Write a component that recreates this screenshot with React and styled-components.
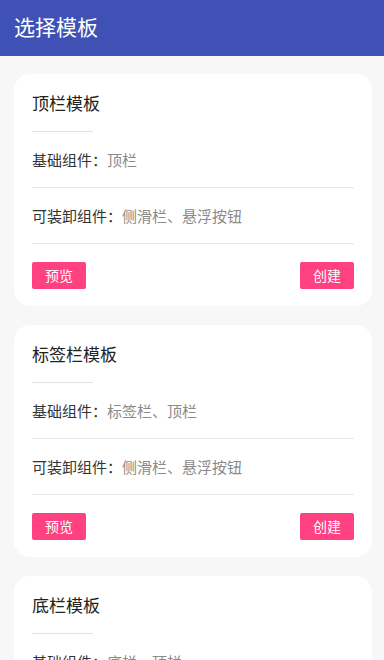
import React from 'react';
import styled, { createGlobalStyle } from 'styled-components';

const templates = [
  { title: '顶栏模板', base: '顶栏', optional: '侧滑栏、悬浮按钮' },
  { title: '标签栏模板', base: '标签栏、顶栏', optional: '侧滑栏、悬浮按钮' },
  { title: '底栏模板', base: '底栏、顶栏', optional: '侧滑栏、悬浮按钮' },
];

const GlobalStyle = createGlobalStyle`
  html, body {
    margin: 0;
    padding: 0;
    background: #f7f7f7;
    font-family: "Noto Sans CJK SC", "Noto Sans", sans-serif;
  }
  * {
    box-sizing: border-box;
  }
`;

const App = () => {
  return (
    <Page>
      <GlobalStyle />
      <TopBar>
        <TopTitle>选择模板</TopTitle>
      </TopBar>
      <List>
        {templates.map((t) => (
          <Card key={t.title}>
            <CardTitle>{t.title}</CardTitle>
            <ShortRule />
            <Row>
              <Label>基础组件：</Label>
              <Value>{t.base}</Value>
            </Row>
            <Row>
              <Label>可装卸组件：</Label>
              <Value>{t.optional}</Value>
            </Row>
            <Actions>
              <Button>预览</Button>
              <Button>创建</Button>
            </Actions>
          </Card>
        ))}
      </List>
    </Page>
  );
};

const Page = styled.div`
  min-height: 100vh;
  background: #f7f7f7;
`;

const TopBar = styled.header`
  display: flex;
  align-items: center;
  height: 56px;
  padding: 0 14px 4px;
  background: #3f51b5;
`;

const TopTitle = styled.h1`
  margin: 0;
  font-size: 21px;
  font-weight: 400;
  line-height: 1;
  color: #ffffff;
`;

const List = styled.div`
  display: flex;
  flex-direction: column;
  gap: 19px;
  padding: 18px 12px 18px 14px;
`;

const Card = styled.section`
  display: flex;
  flex-direction: column;
  height: 232px;
  padding: 18px 18px 17px;
  border-radius: 16px;
  background: #ffffff;
`;

const CardTitle = styled.h2`
  margin: 0;
  font-size: 17px;
  font-weight: 400;
  line-height: 22px;
  color: #222222;
`;

const ShortRule = styled.div`
  width: 61px;
  height: 1px;
  margin-top: 17px;
  background: #e2e2e2;
`;

const Row = styled.div`
  display: flex;
  align-items: center;
  height: 56px;
  border-bottom: 1px solid #e6e6e6;
  font-size: 15px;
`;

const Label = styled.span`
  color: #333333;
`;

const Value = styled.span`
  color: #8a8a8a;
`;

const Actions = styled.div`
  display: flex;
  justify-content: space-between;
  margin-top: 18px;
`;

const Button = styled.button`
  width: 54px;
  height: 27px;
  padding: 0;
  border: none;
  border-radius: 2px;
  background: #ff4081;
  color: #ffffff;
  font-family: inherit;
  font-size: 14px;
  line-height: 27px;
`;

export default App;
